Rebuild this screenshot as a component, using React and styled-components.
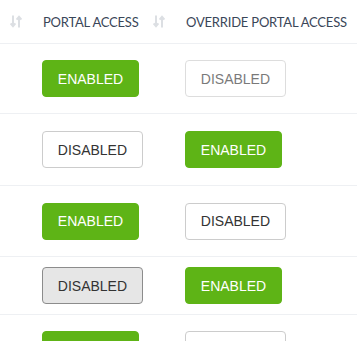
import React from "react";
import styled, { createGlobalStyle, css } from "styled-components";

const Global = createGlobalStyle`
  *, *::before, *::after { box-sizing: border-box; }
  html, body { margin: 0; padding: 0; background: #fff; }
  body { font-family: "Liberation Sans", Arial, sans-serif; }
`;

const Table = styled.div`
  display: flex;
  flex-direction: column;
  width: 357px;
  height: 341px;
  overflow: hidden;
`;

const HeaderRow = styled.div`
  display: flex;
  flex: 0 0 44px;
  border-bottom: 1px solid #eef0f3;
`;

const HeaderCell = styled.div`
  width: 143px;
  flex: 0 0 143px;
  display: flex;
  align-items: center;
  padding-left: 10px;
  gap: 21px;
  white-space: nowrap;

  svg {
    flex: 0 0 auto;
  }
`;

const HeaderText = styled.span`
  font-family: Lato, "Liberation Sans", sans-serif;
  font-size: 13px;
  color: #3a4658;
  text-transform: uppercase;
  letter-spacing: -0.2px;
  padding-top: 1px;
`;

const Row = styled.div`
  display: flex;
  align-items: center;
  flex: 0 0 ${(p) => p.$h}px;
  border-bottom: 1px solid #eef0f3;
`;

const Cell = styled.div`
  width: 143px;
  flex: 0 0 143px;
  padding-left: 42px;
  display: flex;
`;

const Btn = styled.button`
  font-family: "Liberation Sans", Arial, sans-serif;
  font-size: 14px;
  height: 37px;
  padding: 0 14.8px;
  border-radius: 4px;
  border: 1px solid #ccc;
  background: #fff;
  color: #333;
  text-transform: uppercase;
  line-height: 1;
  white-space: nowrap;
  cursor: pointer;
  ${(p) =>
    p.$variant === "enabled" &&
    css`
      background: #5eb416;
      border-color: #5eb416;
      color: #fff;
    `}
  ${(p) =>
    p.$variant === "active" &&
    css`
      background: #e6e6e6;
      border-color: #8c8c8c;
    `}
  ${(p) =>
    p.$variant === "muted" &&
    css`
      opacity: 0.65;
    `}
`;

const SortIcon = () => (
  <svg width="12" height="13" viewBox="0 0 12 13" fill="none" stroke="#dcdfe3" strokeWidth="2">
    <path d="M3 0.5V11" />
    <path d="M0.6 8.4L3 11.2L5.4 8.4" />
    <path d="M9 12.5V2" />
    <path d="M6.6 4.6L9 1.8L11.4 4.6" />
  </svg>
);

const rows = [
  { h: 70, a: "enabled", b: "muted" },
  { h: 72, a: "disabled", b: "enabled" },
  { h: 71, a: "enabled", b: "disabled" },
  { h: 58, a: "active", b: "enabled" },
  { h: 70, a: "enabled", b: "disabled" },
];

const label = (v) => (v === "enabled" ? "Enabled" : "Disabled");

export default function App() {
  return (
    <>
      <Global />
      <Table>
        <HeaderRow>
          <HeaderCell>
            <SortIcon />
            <HeaderText>Portal Access</HeaderText>
          </HeaderCell>
          <HeaderCell>
            <SortIcon />
            <HeaderText>Override Portal Access</HeaderText>
          </HeaderCell>
        </HeaderRow>
        {rows.map((r, i) => (
          <Row key={i} $h={r.h}>
            <Cell>
              <Btn $variant={r.a}>{label(r.a)}</Btn>
            </Cell>
            <Cell>
              <Btn $variant={r.b}>{label(r.b)}</Btn>
            </Cell>
          </Row>
        ))}
      </Table>
    </>
  );
}
